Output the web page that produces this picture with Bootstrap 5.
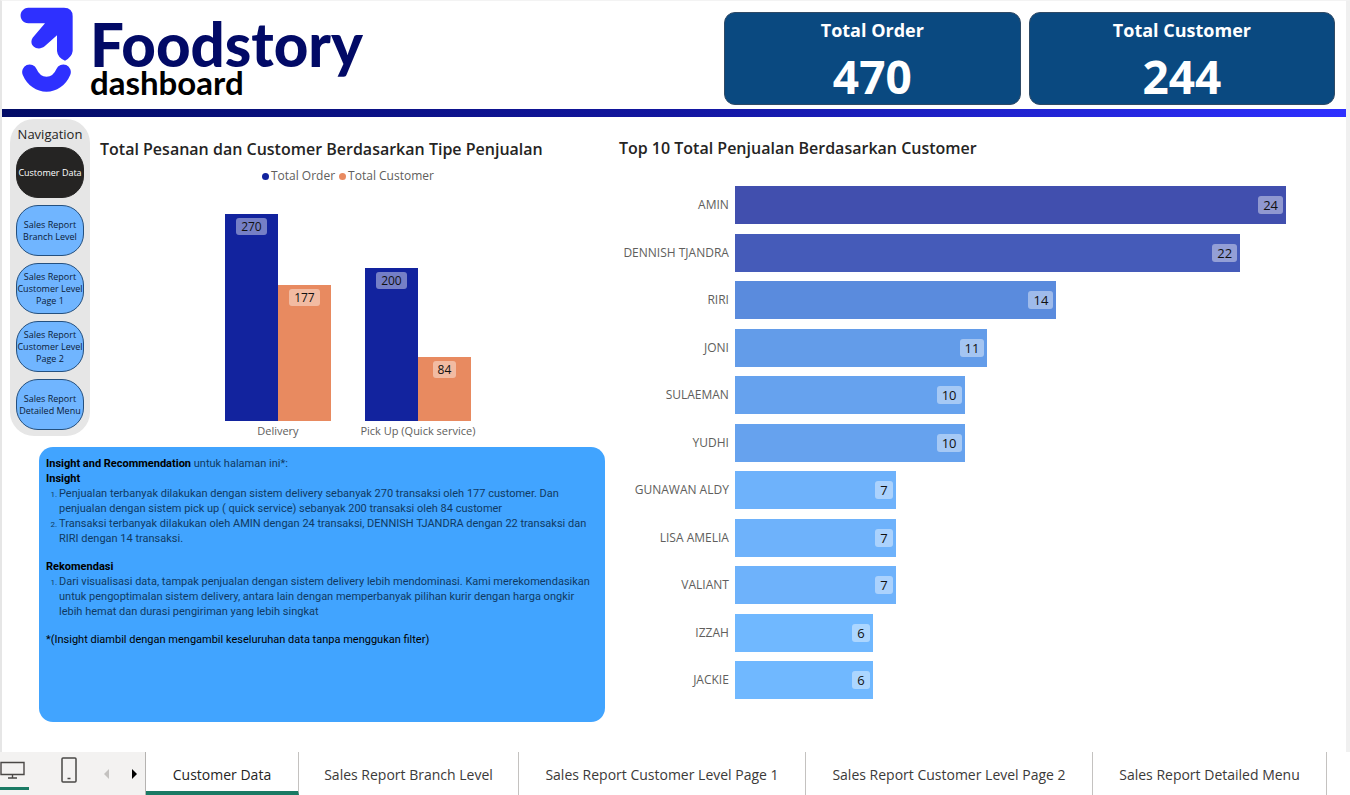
<!DOCTYPE html>
<html lang="id">
<head>
<meta charset="utf-8">
<meta name="viewport" content="width=device-width, initial-scale=1">
<title>Foodstory dashboard</title>
<link rel="stylesheet" href="https://cdn.jsdelivr.net/npm/bootstrap@5.3.0/dist/css/bootstrap.min.css">
<style>
  body { font-family: "Open Sans", "Noto Sans", sans-serif; color: #252423; background: #fff; }
  .report { border-left: 2px solid #e6e6e6; border-right: 4px solid #f0f0f0; border-top: 1px solid #f3f3f3; }
  .report-head { height: 108px; }
  .logo-mark { width: 54px; height: 86px; margin: 6px 0 0 18px; }
  .wordmark { font-family: Lato, sans-serif; font-weight: 900; font-size: 60px; line-height: 62px; color: #020a66; margin: 12px 0 0 16px; }
  .wordmark small { display: block; font-weight: 700; font-size: 33px; line-height: 30px; color: #000; margin-top: -8px; }
  .kpis { display: grid; grid-template-columns: 297fr 306fr; gap: 8px; width: 46.3%; padding: 11px 11px 4px 0; }
  .kpi { background: #0a4980; border: 1px solid #2f4a66; border-radius: 11px; color: #fff; font-weight: 700; text-align: center; }
  .kpi-name { font-size: 18px; line-height: 26px; padding-top: 4px; }
  .kpi-value { font-size: 46px; line-height: 50px; padding-top: 8px; }
  .stripe { height: 8px; background: linear-gradient(90deg, #020c66, #1216a0 50%, #2e30ff); }
  .panes { display: grid; grid-template-columns: 459fr 541fr; }
  .side { width: 80px; height: 317px; margin: 2px 0 0 8px; padding: 7px 6px 0; background: #e6e6e6; border-radius: 24px; }
  .side-title { font-size: 13px; line-height: 17px; margin-bottom: 4px; white-space: nowrap; }
  .side-list { gap: 7px; }
  .side-btn { width: 68px; height: 51px; padding: 0; border: 1px solid #24507f; border-radius: 22px; background: #70b5ff; color: #0b2038; font-size: 9px; line-height: 12px; white-space: nowrap; display: flex; align-items: center; justify-content: center; }
  .side-btn.current { background: #252423; border-color: #252423; color: #fff; }
  .chart-title { font-size: 16px; line-height: 22px; font-weight: 600; margin: 0; white-space: nowrap; }
  .col-chart { padding: 21px 23px 0 10px; }
  .legend-row { font-size: 12px; line-height: 16px; color: #605e5c; margin-top: 8px; }
  .key { width: 7px; height: 7px; border-radius: 50%; display: inline-block; margin-right: 2px; }
  .c-order { background: #12239e; }
  .c-cust { background: #e88a60; }
  .plot { height: 207px; margin-top: 30px; gap: 34px; }
  .vbar { width: 53px; padding-top: 4px; }
  .num { background: rgba(255,255,255,.42); color: #111; border-radius: 3px; font-size: 12px; line-height: 17px; padding: 0 5px; }
  .hbar .num { font-size: 13px; line-height: 18px; }
  .cats { font-size: 11px; line-height: 16px; color: #605e5c; margin-top: 2px; }
  .cats span { width: 140px; text-align: center; white-space: nowrap; }
  .insight { margin: 8px 14px 0 37px; height: 275px; border-radius: 14px; background: #41a4ff; padding: 9px 7px; font-family: Roboto, sans-serif; font-size: 11px; line-height: 15px; color: #103a63; }
  .insight p, .insight ol { margin: 0; }
  .insight ol { padding-left: 13px; margin-bottom: 13px; }
  .insight li::marker { font-size: 8px; }
  .insight b, .insight .dark { color: #000; }
  .bar-chart { padding: 20px 60px 0 0; }
  .bar-rows { height: 513px; margin-top: 27px; }
  .bar-row { display: grid; grid-template-columns: 110px 1fr; column-gap: 6px; align-items: center; }
  .bar-name { font-size: 12px; line-height: 16px; color: #605e5c; text-align: right; white-space: nowrap; }
  .hbar { height: 38px; display: flex; align-items: center; justify-content: flex-end; padding-right: 3px; }
  .tabs-row { height: 43px; }
  .viewer { width: 146px; background: #f3f2f1; border-right: 1px solid #b5b3b1; flex: none; }
  .viewer button { border: 0; background: none; padding: 0; }
  .view-desktop { width: 29px; height: 38px; border-bottom: 3px solid #1a7a64 !important; }
  .page-tabs { display: grid; grid-template-columns: 153fr 220fr 287fr 287fr 234fr 23fr; }
  .page-tabs a { color: #3b3a39; font-size: 14px; text-decoration: none; border-right: 1px solid #c4c2c0; display: flex; align-items: center; justify-content: center; white-space: nowrap; padding-top: 1px; }
  .page-tabs a.current { color: #252423; border-bottom: 4px solid #1a7a64; padding-top: 5px; }
</style>
</head>
<body class="d-flex flex-column min-vh-100">
<div class="report flex-grow-1">
  <header class="report-head d-flex">
    <svg class="logo-mark flex-shrink-0" viewBox="60 20 162 258" aria-hidden="true">
      <path fill="#2e30ff" d="M85 22H192Q218 22 218 48V152Q216 170 195 181Q173 172 171 152V105L134 138C112 155 84 134 98 112L135 69H85C54 67 54 24 85 22Z"/>
      <path fill="none" stroke="#2e30ff" stroke-width="45" stroke-linecap="round" d="M89 215C110 264 169 264 190 215"/>
    </svg>
    <h1 class="wordmark">Foodstory<small>dashboard</small></h1>
    <div class="kpis ms-auto">
      <section class="kpi"><div class="kpi-name">Total Order</div><div class="kpi-value">470</div></section>
      <section class="kpi"><div class="kpi-name">Total Customer</div><div class="kpi-value">244</div></section>
    </div>
  </header>
  <div class="stripe"></div>
  <main class="panes">
    <div>
      <div class="d-flex">
        <nav class="side flex-shrink-0" aria-label="Navigation">
          <div class="side-title d-flex justify-content-center">Navigation</div>
          <div class="side-list d-flex flex-column">
            <button class="side-btn current">Customer Data</button>
            <button class="side-btn">Sales Report<br>Branch Level</button>
            <button class="side-btn">Sales Report<br>Customer Level<br>Page 1</button>
            <button class="side-btn">Sales Report<br>Customer Level<br>Page 2</button>
            <button class="side-btn">Sales Report<br>Detailed Menu</button>
          </div>
        </nav>
        <section class="col-chart flex-grow-1">
          <h2 class="chart-title">Total Pesanan dan Customer Berdasarkan Tipe Penjualan</h2>
          <div class="legend-row d-flex justify-content-center">
            <span class="me-1"><i class="key c-order"></i>Total Order</span>
            <span><i class="key c-cust"></i>Total Customer</span>
          </div>
          <div class="plot d-flex justify-content-center">
            <div class="d-flex align-items-end">
              <div class="vbar c-order d-flex justify-content-center align-items-start" style="height:100%"><span class="num">270</span></div>
              <div class="vbar c-cust d-flex justify-content-center align-items-start" style="height:65.6%"><span class="num">177</span></div>
            </div>
            <div class="d-flex align-items-end">
              <div class="vbar c-order d-flex justify-content-center align-items-start" style="height:74.1%"><span class="num">200</span></div>
              <div class="vbar c-cust d-flex justify-content-center align-items-start" style="height:31.1%"><span class="num">84</span></div>
            </div>
          </div>
          <div class="cats d-flex justify-content-center"><span>Delivery</span><span>Pick Up (Quick service)</span></div>
        </section>
      </div>
      <section class="insight">
        <p><b>Insight and Recommendation</b> untuk halaman ini*:</p>
        <p><b>Insight</b></p>
        <ol>
          <li>Penjualan terbanyak dilakukan dengan sistem delivery sebanyak 270 transaksi oleh 177 customer. Dan penjualan dengan sistem pick up ( quick service) sebanyak 200 transaksi oleh 84 customer</li>
          <li>Transaksi terbanyak dilakukan oleh AMIN dengan 24 transaksi, DENNISH TJANDRA dengan 22 transaksi dan RIRI dengan 14 transaksi.</li>
        </ol>
        <p><b>Rekomendasi</b></p>
        <ol>
          <li>Dari visualisasi data, tampak penjualan dengan sistem delivery lebih mendominasi. Kami merekomendasikan untuk pengoptimalan sistem delivery, antara lain dengan memperbanyak pilihan kurir dengan harga ongkir lebih hemat dan durasi pengiriman yang lebih singkat</li>
        </ol>
        <p class="dark">*(Insight diambil dengan mengambil keseluruhan data tanpa menggukan filter)</p>
      </section>
    </div>
    <section class="bar-chart">
      <h2 class="chart-title">Top 10 Total Penjualan Berdasarkan Customer</h2>
      <div class="bar-rows d-flex flex-column justify-content-between">
        <div class="bar-row"><span class="bar-name">AMIN</span><div class="hbar" style="width:100%;background:#414fae"><span class="num">24</span></div></div>
        <div class="bar-row"><span class="bar-name">DENNISH TJANDRA</span><div class="hbar" style="width:91.67%;background:#455bb9"><span class="num">22</span></div></div>
        <div class="bar-row"><span class="bar-name">RIRI</span><div class="hbar" style="width:58.33%;background:#5a8bdd"><span class="num">14</span></div></div>
        <div class="bar-row"><span class="bar-name">JONI</span><div class="hbar" style="width:45.83%;background:#639ce9"><span class="num">11</span></div></div>
        <div class="bar-row"><span class="bar-name">SULAEMAN</span><div class="hbar" style="width:41.67%;background:#66a2ee"><span class="num">10</span></div></div>
        <div class="bar-row"><span class="bar-name">YUDHI</span><div class="hbar" style="width:41.67%;background:#66a2ee"><span class="num">10</span></div></div>
        <div class="bar-row"><span class="bar-name">GUNAWAN ALDY</span><div class="hbar" style="width:29.17%;background:#6eb2fb"><span class="num">7</span></div></div>
        <div class="bar-row"><span class="bar-name">LISA AMELIA</span><div class="hbar" style="width:29.17%;background:#6eb2fb"><span class="num">7</span></div></div>
        <div class="bar-row"><span class="bar-name">VALIANT</span><div class="hbar" style="width:29.17%;background:#6eb2fb"><span class="num">7</span></div></div>
        <div class="bar-row"><span class="bar-name">IZZAH</span><div class="hbar" style="width:25%;background:#70b8ff"><span class="num">6</span></div></div>
        <div class="bar-row"><span class="bar-name">JACKIE</span><div class="hbar" style="width:25%;background:#70b8ff"><span class="num">6</span></div></div>
      </div>
    </section>
  </main>
</div>
<footer class="tabs-row d-flex">
  <div class="viewer d-flex align-items-start">
    <button class="view-desktop" aria-label="Desktop layout">
      <svg width="25" height="20" viewBox="0 0 25 20" fill="none" stroke="#4a4846" stroke-width="1.4" class="d-block"><path d="M1 2.5H24V14.500H1ZM12.500 14.500V18M8 18H17"/></svg>
    </button>
    <button class="ms-4 ps-2 pt-1" aria-label="Mobile layout">
      <svg width="16" height="28" viewBox="0 0 16 28" fill="none" stroke="#4a4846" stroke-width="1.5" class="d-block"><rect x="1" y="2" width="14" height="24" rx="1"/><path d="M6.500 22.500H9.500"/></svg>
    </button>
    <button class="ms-4 h-100" aria-label="Previous pages" disabled><svg width="10" height="12" viewBox="0 0 10 12" class="d-block"><path fill="#c4c2c0" d="M8 1V11L3 6Z"/></svg></button>
    <button class="ms-3 h-100" aria-label="Next pages"><svg width="12" height="12" viewBox="0 0 12 12" class="d-block"><path d="M5 1V11L10 6Z"/></svg></button>
  </div>
  <nav class="page-tabs flex-grow-1" aria-label="Pages">
    <a class="current" href="#" aria-current="page">Customer Data</a>
    <a href="#">Sales Report Branch Level</a>
    <a href="#">Sales Report Customer Level Page 1</a>
    <a href="#">Sales Report Customer Level Page 2</a>
    <a href="#">Sales Report Detailed Menu</a>
  </nav>
</footer>
<script src="https://cdn.jsdelivr.net/npm/bootstrap@5.3.0/dist/js/bootstrap.bundle.min.js"></script>
</body>
</html>
